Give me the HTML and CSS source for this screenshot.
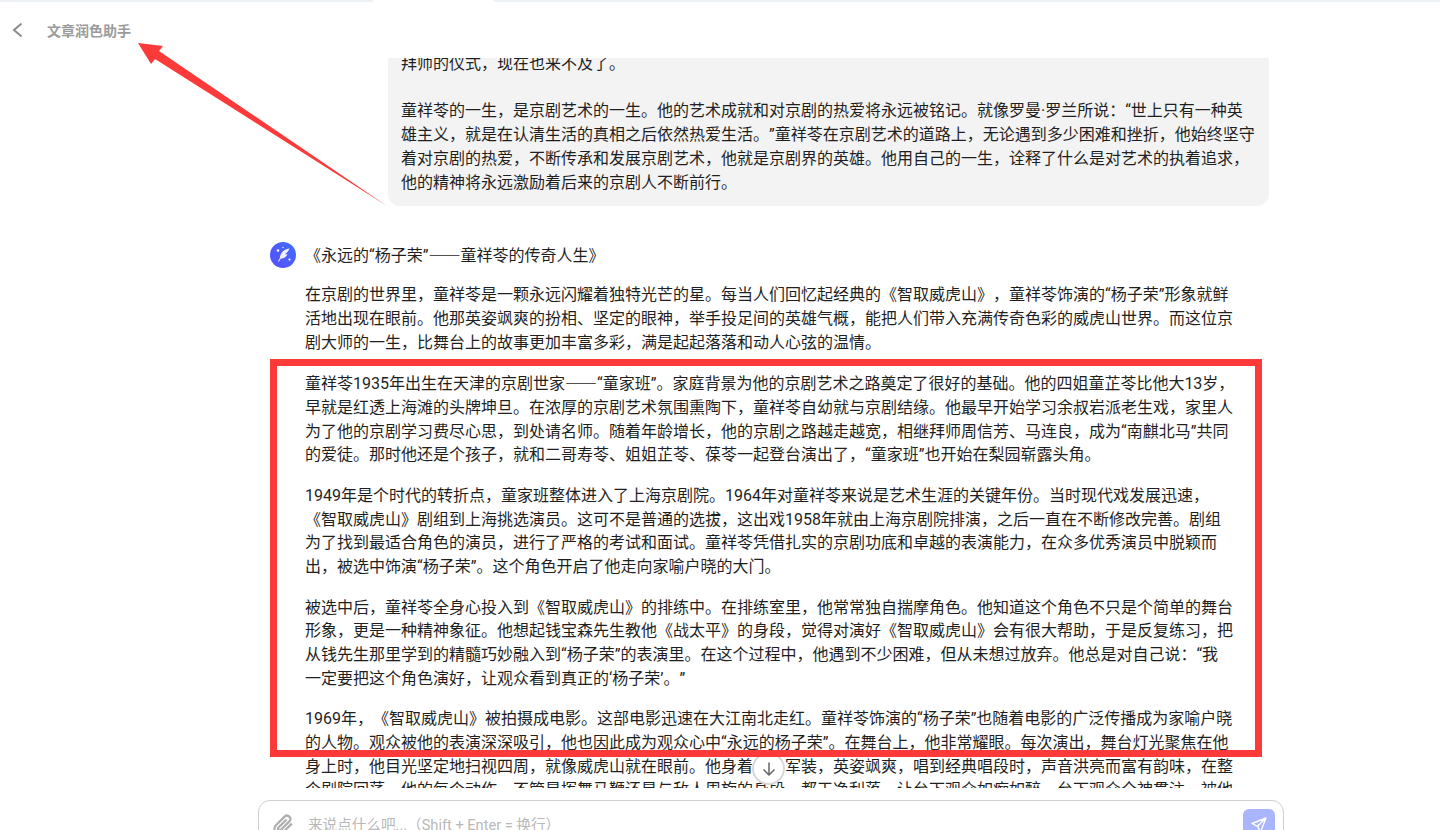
FILE: index.html
```html
<!DOCTYPE html>
<html lang="zh-CN">
<head>
  <meta charset="UTF-8" />
  <meta name="viewport" content="width=device-width, initial-scale=1.0" />
  <title>文章润色助手</title>
  <link rel="stylesheet" href="styles.css">
</head>
<body>
  <div class="top-strip">
    <div class="strip-left"></div>
    <div class="strip-right"></div>
  </div>

  <header class="chat-header">
    <svg class="back-icon" width="12" height="14" viewBox="0 0 12 14" fill="none">
      <path d="M9.500.6 2 7l7.500 6.400" stroke="#8a8a8a" stroke-width="2"/>
    </svg>
    <span class="chat-title">文章润色助手</span>
  </header>

  <main class="chat-scroll">
    <div class="chat-col">
      <div class="user-bubble">
        拜师的仪式，现在也来不及了。<br><br>
        童祥苓的一生，是京剧艺术的一生。他的艺术成就和对京剧的热爱将永远被铭记。就像罗曼·罗兰所说：“世上只有一种英<br>
        雄主义，就是在认清生活的真相之后依然热爱生活。”童祥苓在京剧艺术的道路上，无论遇到多少困难和挫折，他始终坚守<br>
        着对京剧的热爱，不断传承和发展京剧艺术，他就是京剧界的英雄。他用自己的一生，诠释了什么是对艺术的执着追求，<br>
        他的精神将永远激励着后来的京剧人不断前行。
      </div>

      <div class="answer">
        <div class="answer-head">
          <svg class="avatar" width="26" height="26" viewBox="0 0 26 26">
            <defs>
              <linearGradient id="avatarFill" x1="0" y1="1" x2="1" y2="0">
                <stop offset="0" stop-color="#5a4dff"/>
                <stop offset="1" stop-color="#3f6dfb"/>
              </linearGradient>
            </defs>
            <circle cx="13" cy="13" r="13" fill="url(#avatarFill)"/>
            <path d="M19.500 6.500c-4.500.3-8 3.300-9.300 7.500l-.4 2.200-1.800 3 .9.500 1.800-3c3.200-.3 5.600-1.800 6.800-4.500-1 .2-1.900.2-2.600 0 1.700-.8 3.500-3 4.600-5.700z" fill="#fff" fill-opacity=".92"/>
            <circle cx="8" cy="8.500" r="1.300" fill="#fff"/>
            <circle cx="19.500" cy="17.500" r="1.100" fill="#fff"/>
            <circle cx="13" cy="5.500" r=".7" fill="#fff"/>
          </svg>
          <span>《永远的“杨子荣”<span class="dash">——</span>童祥苓的传奇人生》</span>
        </div>

        <div class="answer-body">
          <p>在京剧的世界里，童祥苓是一颗永远闪耀着独特光芒的星。每当人们回忆起经典的《智取威虎山》，童祥苓饰演的“杨子荣”形象就鲜<br>
          活地出现在眼前。他那英姿飒爽的扮相、坚定的眼神，举手投足间的英雄气概，能把人们带入充满传奇色彩的威虎山世界。而这位京<br>
          剧大师的一生，比舞台上的故事更加丰富多彩，满是起起落落和动人心弦的温情。</p>

          <p>童祥苓1935年出生在天津的京剧世家<span class="dash">——</span>“童家班”。家庭背景为他的京剧艺术之路奠定了很好的基础。他的四姐童芷苓比他大13岁，<br>
          早就是红透上海滩的头牌坤旦。在浓厚的京剧艺术氛围熏陶下，童祥苓自幼就与京剧结缘。他最早开始学习余叔岩派老生戏，家里人<br>
          为了他的京剧学习费尽心思，到处请名师。随着年龄增长，他的京剧之路越走越宽，相继拜师周信芳、马连良，成为“南麒北马”共同<br>
          的爱徒。那时他还是个孩子，就和二哥寿苓、姐姐芷苓、葆苓一起登台演出了，“童家班”也开始在梨园崭露头角。</p>

          <p>1949年是个时代的转折点，童家班整体进入了上海京剧院。1964年对童祥苓来说是艺术生涯的关键年份。当时现代戏发展迅速，<br>
          《智取威虎山》剧组到上海挑选演员。这可不是普通的选拔，这出戏1958年就由上海京剧院排演，之后一直在不断修改完善。剧组<br>
          为了找到最适合角色的演员，进行了严格的考试和面试。童祥苓凭借扎实的京剧功底和卓越的表演能力，在众多优秀演员中脱颖而<br>
          出，被选中饰演“杨子荣”。这个角色开启了他走向家喻户晓的大门。</p>

          <p>被选中后，童祥苓全身心投入到《智取威虎山》的排练中。在排练室里，他常常独自揣摩角色。他知道这个角色不只是个简单的舞台<br>
          形象，更是一种精神象征。他想起钱宝森先生教他《战太平》的身段，觉得对演好《智取威虎山》会有很大帮助，于是反复练习，把<br>
          从钱先生那里学到的精髓巧妙融入到“杨子荣”的表演里。在这个过程中，他遇到不少困难，但从未想过放弃。他总是对自己说：“我<br>
          一定要把这个角色演好，让观众看到真正的‘杨子荣’。”</p>

          <p>1969年，《智取威虎山》被拍摄成电影。这部电影迅速在大江南北走红。童祥苓饰演的“杨子荣”也随着电影的广泛传播成为家喻户晓<br>
          的人物。观众被他的表演深深吸引，他也因此成为观众心中“永远的杨子荣”。在舞台上，他非常耀眼。每次演出，舞台灯光聚焦在他<br>
          身上时，他目光坚定地扫视四周，就像威虎山就在眼前。他身着一身军装，英姿飒爽，唱到经典唱段时，声音洪亮而富有韵味，在整<br>
          个剧院回荡。他的每个动作，不管是挥舞马鞭还是与敌人周旋的身段，都干净利落，让台下观众如痴如醉。台下观众全神贯注，被他</p>
        </div>
      </div>
    </div>
  </main>

  <button class="scroll-down" aria-label="scroll to bottom">
    <svg width="18" height="18" viewBox="0 0 18 18" fill="none">
      <path d="M9 2.500v12.500M3.500 9.500 9 15l5.500-5.500" stroke="#666" stroke-width="1.500"/>
    </svg>
  </button>

  <div class="composer">
    <svg class="clip-icon" width="22" height="22" viewBox="0 0 24 24" fill="none">
      <path d="M20.500 10.500 11 20a5.500 5.500 0 0 1-7.800-7.800l9.700-9.600a3.700 3.700 0 0 1 5.200 5.200l-9.400 9.400a1.800 1.800 0 0 1-2.600-2.600l8.700-8.700" stroke="#aeaeae" stroke-width="2.400"/>
    </svg>
    <input class="composer-input" placeholder="来说点什么吧...（Shift + Enter = 换行）" />
    <button class="send-btn" aria-label="send">
      <svg width="18" height="18" viewBox="0 0 18 18" fill="none">
        <path d="M16 2 2 7.500l5.500 2.800L10.500 16zM7.500 10.300 16 2" stroke="#fff" stroke-width="1.400" stroke-linejoin="round"/>
      </svg>
    </button>
  </div>

  <!-- red marks drawn on top of the screenshot -->
  <svg class="marks" width="1440" height="830" viewBox="0 0 1440 830">
    <rect x="273.500" y="362.500" width="985" height="391" fill="none" stroke="#fd3a3a" stroke-width="7"/>
    <polygon points="138,43 163,46 159,51 387,206 155,59 151,64" fill="#fd3a3a"/>
  </svg>
</body>
</html>
```

FILE: styles.css
```css
html, body {
  margin: 0;
  padding: 0;
  height: 830px;
  overflow: hidden;
  background: #ffffff;
  font-family: Roboto, 'Noto Sans CJK SC', sans-serif;
  color: #1f1f1f;
  text-spacing-trim: space-all;
}

body {
  position: relative;
}

.top-strip {
  display: flex;
  justify-content: space-between;
  height: 2px;
}

.strip-left,
.strip-right {
  background: #edf0f4;
  border-radius: 0 0 3px 3px;
}

.strip-left {
  width: 373px;
}

.strip-right {
  width: 947px;
}

.chat-header {
  display: flex;
  align-items: center;
  height: 56px;
  padding: 0 0 1px 12px;
  box-sizing: border-box;
}

.back-icon {
  margin-right: 23px;
}

.chat-title {
  font-size: 14px;
  font-weight: 700;
  color: #9b9b9b;
}

.chat-scroll {
  height: 730px;
  overflow: hidden;
}

.chat-col {
  width: 1026px;
  margin-left: 258px;
  margin-top: -16px;
  font-size: 16px;
  line-height: 23.7px;
}

.dash {
  font-family: 'Noto Sans CJK SC', sans-serif;
}

.user-bubble {
  width: 881px;
  margin-left: 130px;
  padding: 10px 0 12px 13px;
  box-sizing: border-box;
  background: #f3f3f3;
  border-radius: 12px;
  white-space: nowrap;
}

.answer {
  margin-top: 36px;
  padding-left: 12px;
}

.answer-head {
  display: flex;
  align-items: center;
  gap: 9px;
  height: 26px;
}

.avatar {
  flex: none;
}

.answer-body {
  margin-top: 15px;
  padding-left: 35px;
  white-space: nowrap;
}

.answer-body p {
  margin: 0 0 16.9px;
}

.scroll-down {
  position: absolute;
  left: 752px;
  top: 752px;
  width: 33px;
  height: 33px;
  display: flex;
  align-items: center;
  justify-content: center;
  padding: 0;
  background: #ffffff;
  border: 2px solid #d8d8d8;
  border-radius: 50%;
}

.composer {
  display: flex;
  align-items: flex-start;
  width: 1026px;
  height: 64px;
  margin: 12px 0 0 258px;
  padding: 8px 8px 0 14px;
  box-sizing: border-box;
  border: 1px solid #cfcfcf;
  border-radius: 12px;
}

.clip-icon {
  flex: none;
  margin: 5px 13px 0 0;
}

.composer-input {
  flex: 1;
  height: 32px;
  padding: 0;
  border: none;
  outline: none;
  background: none;
  font-family: Roboto, 'Noto Sans CJK SC', sans-serif;
  font-size: 14.6px;
  text-spacing-trim: space-all;
}

.composer-input::placeholder {
  color: #b9b9b9;
}

.send-btn {
  flex: none;
  width: 32px;
  height: 32px;
  display: flex;
  align-items: center;
  justify-content: center;
  padding: 0;
  background: #a9b6ff;
  border: none;
  border-radius: 6px;
}

.marks {
  position: absolute;
  left: 0;
  top: 0;
  pointer-events: none;
}
```
